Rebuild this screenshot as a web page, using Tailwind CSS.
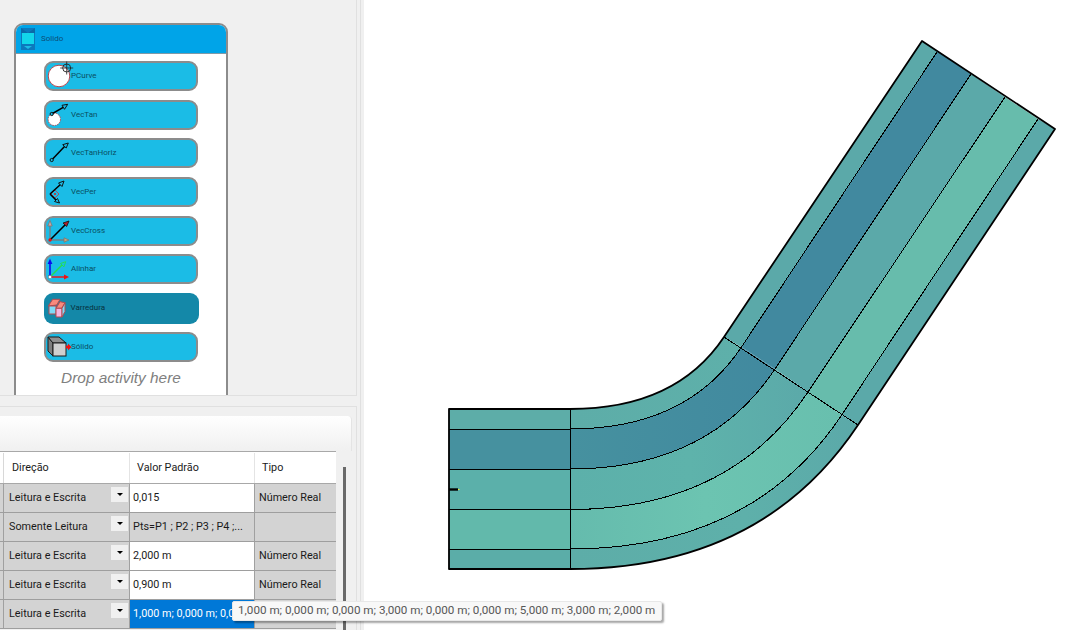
<!DOCTYPE html>
<html>
<head>
<meta charset="utf-8">
<script src="https://cdn.jsdelivr.net/npm/@tailwindcss/browser@4"></script>
</head>
<body class="m-0">
<div class="relative flex w-[1068px] h-[630px] overflow-hidden bg-white font-['Roboto',sans-serif]">
  <!-- left column -->
  <div class="flex w-[364px] h-full shrink-0 bg-[#f0f0f0]">
   <div class="w-[361px] h-full border-r border-[#e0e0e0]">
    <div class="flex flex-col w-[357px] h-full">
    <!-- activity designer -->
    <div class="h-[396px] shrink-0 overflow-hidden pt-[23px] pl-[14px] border-b border-r border-[#e0e0e0]">
      <div class="w-[214px] h-[420px] rounded-t-[9px] border-2 border-[#8c8c8c] bg-white overflow-hidden">
        <div class="flex items-center h-[29px] bg-[#00a4e8] border-b border-[#7f9aa8] pl-[4px] gap-[5px]">
          <svg width="16" height="22" viewBox="0 0 16 22">
            <rect x="1" y="0" width="14" height="22" fill="#0c79bd"/>
            <path d="M1 0 L8 5 L15 0 V5 H1Z" fill="#0a6aa8"/>
            <rect x="2" y="5" width="12" height="11" fill="#12d6ea"/>
            <path d="M4 18 H12 L8 21Z" fill="#1bbce6"/>
          </svg>
          <span class="text-[8px] leading-none text-[#0b4f78]">Solido</span>
        </div>
        <div class="flex flex-col items-center pt-[7px] gap-[8.7px]">
          <!-- PCurve -->
          <div class="relative flex items-center w-[154px] h-[30px] pl-[25px] rounded-[9px] border-2 border-[#8c8c8c] bg-[#1bbce6] text-[8px] text-[#0a4f62]">
            <svg class="absolute left-[1px] -top-[2px] overflow-visible" width="30" height="30" viewBox="0 0 30 30">
              <circle cx="12" cy="15" r="10.8" fill="#fff" stroke="#b5474f"/>
              <circle cx="19.7" cy="7" r="4" fill="none" stroke="#222" stroke-width="0.9"/>
              <path d="M19.7 0.5 V13.5 M13.2 7 H26.2" stroke="#222" stroke-width="0.8"/>
            </svg>
            PCurve
          </div>
          <!-- VecTan -->
          <div class="relative flex items-center w-[154px] h-[30px] pl-[25px] rounded-[9px] border-2 border-[#8c8c8c] bg-[#1bbce6] text-[8px] text-[#0a4f62]">
            <svg class="absolute left-[1px] -top-[2px] overflow-visible" width="30" height="30" viewBox="0 0 30 30">
              <circle cx="7.3" cy="19.3" r="6.2" fill="#fff" stroke="#b5474f" stroke-dasharray="1.5 1"/>
              <path d="M4.7 14 L17.5 6.7" stroke="#000" stroke-width="1.5"/>
              <circle cx="4.7" cy="14" r="1.6" fill="#1bbce6" stroke="#111"/>
              <path d="M20.7 4.3 L15 5.3 L17.5 9.3Z" fill="#1bbce6" stroke="#111"/>
            </svg>
            VecTan
          </div>
          <!-- VecTanHoriz -->
          <div class="relative flex items-center w-[154px] h-[30px] pl-[25px] rounded-[9px] border-2 border-[#8c8c8c] bg-[#1bbce6] text-[8px] text-[#0a4f62]">
            <svg class="absolute left-[1px] -top-[2px] overflow-visible" width="30" height="30" viewBox="0 0 30 30">
              <path d="M4.7 22 L18 8" stroke="#000" stroke-width="1.5"/>
              <circle cx="4.7" cy="22" r="1.6" fill="#1bbce6" stroke="#111"/>
              <path d="M21.3 5 L15.7 6.7 L19.2 10Z" fill="#1bbce6" stroke="#111"/>
            </svg>
            VecTanHoriz
          </div>
          <!-- VecPer -->
          <div class="relative flex items-center w-[154px] h-[30px] pl-[25px] rounded-[9px] border-2 border-[#8c8c8c] bg-[#1bbce6] text-[8px] text-[#0a4f62]">
            <svg class="absolute left-[1px] -top-[2px] overflow-visible" width="30" height="30" viewBox="0 0 30 30">
              <path d="M8 13 L12 17 L8 21 L4 17Z" fill="none" stroke="#b5474f" stroke-width="0.9"/>
              <circle cx="8" cy="17" r="1" fill="#c22"/>
              <path d="M3 17 L14 7 M3 17 L10 24" stroke="#000" stroke-width="1.5"/>
              <path d="M17 4 L11.5 6 L15 9.5Z" fill="#1bbce6" stroke="#111"/>
              <path d="M12.5 26 L10.5 21.5 L7.5 24.5Z" fill="#1bbce6" stroke="#111"/>
            </svg>
            VecPer
          </div>
          <!-- VecCross -->
          <div class="relative flex items-center w-[154px] h-[30px] pl-[25px] rounded-[9px] border-2 border-[#8c8c8c] bg-[#1bbce6] text-[8px] text-[#0a4f62]">
            <svg class="absolute left-[1px] -top-[2px] overflow-visible" width="30" height="30" viewBox="0 0 30 30">
              <path d="M3 24 V9 M3 24 H18" stroke="#6f7f86" stroke-width="1.4"/>
              <path d="M3 4.5 L0.8 10 H5.2Z" fill="#c6a6a6" stroke="#777" stroke-width="0.8"/>
              <path d="M22 24 L17 21.8 V26.2Z" fill="#c6a67a" stroke="#777" stroke-width="0.8"/>
              <path d="M3 24 L19 8" stroke="#000" stroke-width="1.6"/>
              <path d="M22 5 L16 7 L19.7 10.5Z" fill="#b0202a" stroke="#111" stroke-width="0.8"/>
              <circle cx="3" cy="24" r="1.7" fill="#f01010"/>
            </svg>
            VecCross
          </div>
          <!-- Alinhar -->
          <div class="relative flex items-center w-[154px] h-[30px] pl-[25px] rounded-[9px] border-2 border-[#8c8c8c] bg-[#1bbce6] text-[8px] text-[#0a4f62]">
            <svg class="absolute left-[1px] -top-[2px] overflow-visible" width="30" height="30" viewBox="0 0 30 30">
              <path d="M3 23 L16 10" stroke="#22e04a" stroke-width="1.4"/>
              <path d="M18.7 7.7 L13.5 9.5 L17 12.8Z" fill="#1bbce6" stroke="#22e04a" stroke-width="0.9"/>
              <path d="M3 23 V9" stroke="#0a0af0" stroke-width="1.6"/>
              <path d="M3 4.5 L0.6 10 H5.4Z" fill="#0a0af0"/>
              <path d="M3 23 H18" stroke="#f01010" stroke-width="1.4"/>
              <path d="M22 23 L17 20.6 V25.4Z" fill="#f01010"/>
              <rect x="1.5" y="21.5" width="3" height="3" fill="#fff" stroke="#555" stroke-width="0.4"/>
            </svg>
            Alinhar
          </div>
          <!-- Varredura -->
          <div class="relative -my-[0.5px] flex items-center w-[155px] h-[31px] pl-[27px] rounded-[9px] bg-[#1488a8] text-[8px] text-[#07323e]">
            <svg class="absolute left-0 top-0 overflow-visible" width="30" height="30" viewBox="0 0 30 30">
              <path d="M4.3 13 L8.7 6.3 H16 L12.7 12Z" fill="#f98a7c" stroke="#b34a50"/>
              <path d="M16 8.7 L21 9.7 L17.7 15.3 H12Z" fill="#f98a7c" stroke="#b34a50"/>
              <path d="M5 13 H12 V21 H5Z" fill="#7fdcf8" stroke="#b34a50"/>
              <path d="M12 15.3 H18 V24 H12Z" fill="#f7b6e0" stroke="#b34a50"/>
              <path d="M18 15.3 L21 9.7 V18.5 L18 24Z" fill="#7fdcf8" stroke="#b34a50"/>
            </svg>
            Varredura
          </div>
          <!-- Solido -->
          <div class="relative flex items-center w-[154px] h-[30px] pl-[25px] rounded-[9px] border-2 border-[#8c8c8c] bg-[#1bbce6] text-[8px] text-[#0a4f62]">
            <svg class="absolute left-[1px] -top-[2px] overflow-visible" width="30" height="30" viewBox="0 0 30 30">
              <path d="M1 5 L6 11 V24 L1 19Z" fill="#7d7d7d" stroke="#1a1a1a"/>
              <path d="M1 5 H12 L19 11 H6Z" fill="#8f8f8f" stroke="#1a1a1a"/>
              <rect x="6" y="11" width="13" height="13" fill="#cfcfcf" stroke="#1a1a1a"/>
              <path d="M19 13.5 H21 V11.5 L24.5 15 L21 18.5 V16.5 H19Z" fill="#f01010"/>
            </svg>
            Sólido
          </div>
          <div class="-mt-[1px] font-['Liberation_Sans',sans-serif] italic text-[15.4px] leading-[16px] text-[#808080]">Drop activity here</div>
        </div>
      </div>
    </div>
    <!-- splitter -->
    <div class="h-[10px] shrink-0"></div>
    <!-- properties -->
    <div class="flex-1 pt-[9px] min-h-0 overflow-hidden border-t border-r border-[#e0e0e0]">
      <div class="h-[35px] w-[352px] rounded-tr-[4px] bg-gradient-to-b from-white to-[#f0f0f0] border-r border-[#e4e4e4]"></div>
      <div class="flex">
        <div class="w-[336px] text-[10.8px] leading-none text-[#1a1a1a]">
          <div class="flex h-[33px] pt-[1px] bg-white border-t border-b border-[#a8a8a8]">
            <div class="w-[4px] border-r border-[#d8d8d8]"></div>
            <div class="flex items-center w-[126px] pl-[8px] border-r border-[#e4e4e4]">Direção</div>
            <div class="flex items-center w-[125px] pl-[7px] border-r border-[#e4e4e4]">Valor Padrão</div>
            <div class="flex items-center flex-1 pl-[7px]">Tipo</div>
          </div>
          <!-- rows -->
          <div class="flex h-[29px] border-b border-[#9e9e9e]">
            <div class="w-[4px] bg-[#d3d3d3] border-r border-[#a0a0a0]"></div>
            <div class="relative flex items-center w-[126px] pl-[5px] bg-[#d3d3d3] border-r border-[#a0a0a0]">Leitura e Escrita<div class="absolute right-[1px] top-[3px] flex justify-center pt-[6px] w-[17px] h-[15px] bg-[#f0f0f0]"><div class="w-0 h-0 border-x-[3px] border-x-transparent border-t-[3px] border-t-black"></div></div></div>
            <div class="flex items-center w-[125px] pl-[3px] bg-white border-r border-[#a0a0a0]">0,015</div>
            <div class="flex items-center flex-1 pl-[4px] bg-[#d3d3d3]">Número Real</div>
          </div>
          <div class="flex h-[29px] border-b border-[#9e9e9e]">
            <div class="w-[4px] bg-[#d3d3d3] border-r border-[#a0a0a0]"></div>
            <div class="relative flex items-center w-[126px] pl-[5px] bg-[#d3d3d3] border-r border-[#a0a0a0]">Somente Leitura<div class="absolute right-[1px] top-[3px] flex justify-center pt-[6px] w-[17px] h-[15px] bg-[#f0f0f0]"><div class="w-0 h-0 border-x-[3px] border-x-transparent border-t-[3px] border-t-black"></div></div></div>
            <div class="flex items-center w-[125px] pl-[3px] bg-[#d3d3d3] border-r border-[#a0a0a0]">Pts=P1 ; P2 ; P3 ; P4 ;...</div>
            <div class="flex items-center flex-1 pl-[4px] bg-[#d3d3d3]"></div>
          </div>
          <div class="flex h-[29px] border-b border-[#9e9e9e]">
            <div class="w-[4px] bg-[#d3d3d3] border-r border-[#a0a0a0]"></div>
            <div class="relative flex items-center w-[126px] pl-[5px] bg-[#d3d3d3] border-r border-[#a0a0a0]">Leitura e Escrita<div class="absolute right-[1px] top-[3px] flex justify-center pt-[6px] w-[17px] h-[15px] bg-[#f0f0f0]"><div class="w-0 h-0 border-x-[3px] border-x-transparent border-t-[3px] border-t-black"></div></div></div>
            <div class="flex items-center w-[125px] pl-[3px] bg-white border-r border-[#a0a0a0]">2,000 m</div>
            <div class="flex items-center flex-1 pl-[4px] bg-[#d3d3d3]">Número Real</div>
          </div>
          <div class="flex h-[29px] border-b border-[#9e9e9e]">
            <div class="w-[4px] bg-[#d3d3d3] border-r border-[#a0a0a0]"></div>
            <div class="relative flex items-center w-[126px] pl-[5px] bg-[#d3d3d3] border-r border-[#a0a0a0]">Leitura e Escrita<div class="absolute right-[1px] top-[3px] flex justify-center pt-[6px] w-[17px] h-[15px] bg-[#f0f0f0]"><div class="w-0 h-0 border-x-[3px] border-x-transparent border-t-[3px] border-t-black"></div></div></div>
            <div class="flex items-center w-[125px] pl-[3px] bg-white border-r border-[#a0a0a0]">0,900 m</div>
            <div class="flex items-center flex-1 pl-[4px] bg-[#d3d3d3]">Número Real</div>
          </div>
          <div class="flex h-[29px] border-b border-[#9e9e9e]">
            <div class="w-[4px] bg-[#d3d3d3] border-r border-[#a0a0a0]"></div>
            <div class="relative flex items-center w-[126px] pl-[5px] bg-[#d3d3d3] border-r border-[#a0a0a0]">Leitura e Escrita<div class="absolute right-[1px] top-[3px] flex justify-center pt-[6px] w-[17px] h-[15px] bg-[#f0f0f0]"><div class="w-0 h-0 border-x-[3px] border-x-transparent border-t-[3px] border-t-black"></div></div></div>
            <div class="flex items-center w-[125px] pl-[3px] bg-[#0078d7] text-white border-r border-[#a0a0a0] overflow-hidden whitespace-nowrap">1,000 m; 0,000 m; 0,000 m</div>
            <div class="flex items-center flex-1 pl-[4px] bg-[#d3d3d3]"></div>
          </div>
        </div>
        <!-- scrollbar -->
        <div class="ml-[7px] mt-[16px] w-[3px] h-[170px] bg-[#696969]"></div>
      </div>
    </div>
    </div>
   </div>
  </div>
  <!-- canvas -->
  <div class="relative flex-1 bg-white">
    <svg class="absolute -left-[364px] top-0" width="1068" height="630" viewBox="0 0 1068 630">
      <defs>
        <linearGradient id="g1" gradientUnits="userSpaceOnUse" x1="570" y1="0" x2="860" y2="0"><stop offset="0" stop-color="#5DADA8"/><stop offset="0.6" stop-color="#5EB0AA"/><stop offset="1" stop-color="#5BA9A9"/></linearGradient>
        <linearGradient id="g2" gradientUnits="userSpaceOnUse" x1="570" y1="0" x2="780" y2="0"><stop offset="0" stop-color="#46919F"/><stop offset="1" stop-color="#41899F"/></linearGradient>
        <linearGradient id="g3" gradientUnits="userSpaceOnUse" x1="570" y1="0" x2="810" y2="0"><stop offset="0" stop-color="#5CB0AA"/><stop offset="0.5" stop-color="#5EB3AB"/><stop offset="1" stop-color="#5BA9A9"/></linearGradient>
        <linearGradient id="g4" gradientUnits="userSpaceOnUse" x1="570" y1="0" x2="840" y2="0"><stop offset="0" stop-color="#65BBAD"/><stop offset="0.5" stop-color="#6CC4B1"/><stop offset="1" stop-color="#68BFAE"/></linearGradient>
      </defs>
      <rect x="449" y="409" width="121" height="20" fill="#5DADA8"/>
      <rect x="449" y="429" width="121" height="40" fill="#46919F"/>
      <rect x="449" y="469" width="121" height="40.5" fill="#5BB0AA"/>
      <rect x="449" y="509.5" width="121" height="39.5" fill="#62B9AB"/>
      <rect x="449" y="549" width="121" height="20" fill="#5BADA8"/>
      <path d="M570 409 Q676 409 724 337 L741.5 347 Q687 429 570 429Z" fill="url(#g1)"/>
      <path d="M570 429 Q687 429 741.5 347 L775 369 Q708.5 469 570 469Z" fill="url(#g2)"/>
      <path d="M570 469 Q708.5 469 775 369 L808 392 Q730 509.5 570 509.5Z" fill="url(#g3)"/>
      <path d="M570 509.5 Q730 509.5 808 392 L841.7 415 Q752.5 549 570 549Z" fill="url(#g4)"/>
      <path d="M570 549 Q752.5 549 841.7 415 L858 425 Q762 569 570 569Z" fill="url(#g1)"/>
      <path d="M724 337 L922 41 L937.7 51 L741.5 347Z" fill="#5BA9A9"/>
      <path d="M741.5 347 L937.7 51 L971 74 L775 369Z" fill="#41899F"/>
      <path d="M775 369 L971 74 L1005 97 L808 392Z" fill="#5BA9A9"/>
      <path d="M808 392 L1005 97 L1038 119 L841.7 415Z" fill="#67BCAC"/>
      <path d="M841.7 415 L1038 119 L1055 129 L858 425Z" fill="#5BA9A9"/>
      <g fill="none" stroke="#000" stroke-width="1" shape-rendering="crispEdges">
        <path d="M449 429 H570 Q687 429 741.5 347 L937.7 51"/>
        <path d="M449 469 H570 Q708.5 469 775 369 L971 74"/>
        <path d="M449 509.5 H570 Q730 509.5 808 392 L1005 97"/>
        <path d="M449 549 H570 Q752.5 549 841.7 415 L1038 119"/>
        <path d="M570 409 V569"/>
        <path d="M724 337 L858 425"/>
      </g>
      <path d="M570 409 H449 V569 H570 Q762 569 858 425 L1055 129 L922 41 L724 337 Q676 409 570 409Z" fill="none" stroke="#000" stroke-width="1.8" stroke-linejoin="round"/>
      <path d="M449 489.5 H458" stroke="#000" stroke-width="2.4"/>
      <rect x="458" y="489" width="1.5" height="1" fill="#e6f03c"/>
    </svg>
  </div>
  <!-- tooltip -->
  <div class="absolute left-[232px] top-[601px] h-[20px] w-[430px] flex items-center pl-[5px] bg-[#f8f8f8] rounded-[2px] border border-[#e8e8e8] shadow-[2px_2px_2px_rgba(0,0,0,0.35)] text-[11.67px] leading-none text-[#575757] whitespace-nowrap">1,000 m; 0,000 m; 0,000 m; 3,000 m; 0,000 m; 0,000 m; 5,000 m; 3,000 m; 2,000 m</div>
</div>
</body>
</html>
